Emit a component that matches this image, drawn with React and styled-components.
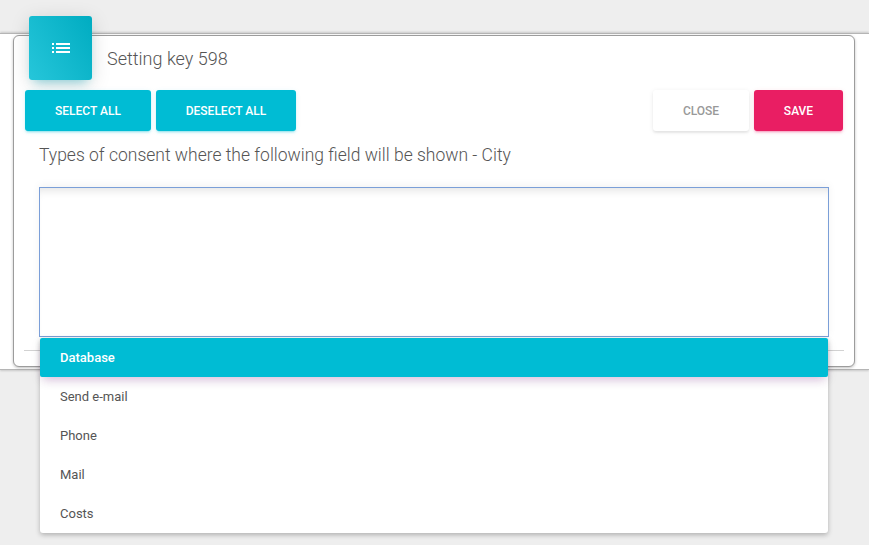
import React from "react";
import styled, { createGlobalStyle } from "styled-components";

const GlobalStyle = createGlobalStyle`
  html, body { margin: 0; padding: 0; }
  body {
    background: #eeeeee;
    font-family: Roboto, "Helvetica Neue", Arial, sans-serif;
    color: #555;
    min-height: 545px;
  }
  #root { padding-top: 33px; }
`;

const Band = styled.div`
  background: #fff;
  border-top: 1px solid #b5b5b5;
  border-bottom: 1px solid #b5b5b5;
  box-shadow: 0 -1px 2px rgba(0,0,0,0.15), 0 1px 2px rgba(0,0,0,0.15);
  padding: 1px 14px 2px 13px;
`;

const Card = styled.div`
  position: relative;
  background: #fff;
  border: 1px solid #9c9c9c;
  border-radius: 6px;
  box-shadow: 0 1px 3px rgba(0,0,0,0.25);
  padding: 0 0 15px;
`;

const Header = styled.div`
  display: flex;
  align-items: flex-start;
`;

const IconBox = styled.div`
  width: 63px;
  height: 64px;
  margin: -20px 0 0 15px;
  border-radius: 3px;
  background: linear-gradient(60deg, #26c6da, #00acc1);
  box-shadow: 0 4px 20px 0 rgba(0,0,0,0.14), 0 7px 10px -5px rgba(0,188,212,0.4);
  display: flex;
  align-items: center;
  justify-content: center;
  color: #fff;
`;

const Title = styled.h4`
  margin: 11px 0 0 15px;
  font-size: 18px;
  font-weight: 300;
  line-height: 24px;
  color: #555;
`;

const ButtonRow = styled.div`
  display: flex;
  gap: 5px;
  margin: 10px 11px 0 11px;
`;

const Spacer = styled.div`
  flex: 1;
`;

const Button = styled.button`
  height: 41px;
  width: ${p => p.$w}px;
  border: none;
  border-radius: 3px;
  font-family: Roboto, Arial, sans-serif;
  font-size: 12px;
  font-weight: 500;
  text-transform: uppercase;
  letter-spacing: 0;
  cursor: pointer;
  background: ${p => p.$bg};
  color: ${p => p.$color};
  box-shadow: ${p => p.$shadow};
`;

const Label = styled.div`
  margin: 12px 0 0 25px;
  font-size: 17.5px;
  font-weight: 300;
  line-height: 24px;
  color: #555;
`;

const FieldWrap = styled.div`
  position: relative;
  margin: 20px 25px 0 25px;
`;

const Field = styled.div`
  height: 150px;
  box-sizing: border-box;
  border: 1px solid #7b9fd8;
  background: #fff;
  box-shadow: inset 0 8px 10px -6px rgba(0,0,0,0.12), 0 -2px 8px rgba(0,0,0,0.05);
`;

const Divider = styled.div`
  height: 1px;
  background: #d2d2d2;
  margin: 13px 10px 0 10px;
`;

const Menu = styled.ul`
  position: absolute;
  top: calc(100% + 1px);
  left: 1px;
  right: 1px;
  margin: 0;
  padding: 0;
  list-style: none;
  background: #fff;
  border-radius: 0 0 3px 3px;
  box-shadow: 0 2px 5px rgba(0,0,0,0.26);
  z-index: 10;
`;

const Item = styled.li`
  height: 39px;
  display: flex;
  align-items: center;
  padding-left: 20px;
  font-size: 13px;
  font-weight: ${p => (p.$active ? 500 : 400)};
  color: ${p => (p.$active ? "#fff" : "#555")};
  background: ${p => (p.$active ? "#00bcd4" : "transparent")};
  border-radius: ${p => (p.$active ? "2px" : "0")};
  box-shadow: ${p =>
    p.$active
      ? "0 6px 10px -4px rgba(156,39,176,0.25), 0 4px 12px 0 rgba(0,0,0,0.08)"
      : "none"};
  position: relative;
`;

const ListIcon = () => (
  <svg width="24" height="24" viewBox="0 0 24 24" fill="currentColor">
    <path d="M3 13h2v-2H3v2zm0 4h2v-2H3v2zm0-8h2V7H3v2zm4 4h14v-2H7v2zm0 4h14v-2H7v2zM7 7v2h14V7H7z" />
  </svg>
);

const items = ["Database", "Send e-mail", "Phone", "Mail", "Costs"];

const tealShadow =
  "0 2px 2px 0 rgba(0,188,212,0.14), 0 3px 1px -2px rgba(0,188,212,0.2), 0 1px 5px 0 rgba(0,188,212,0.12)";
const pinkShadow =
  "0 2px 2px 0 rgba(233,30,99,0.14), 0 3px 1px -2px rgba(233,30,99,0.2), 0 1px 5px 0 rgba(233,30,99,0.12)";
const whiteShadow =
  "0 2px 2px 0 rgba(0,0,0,0.06), 0 1px 5px 0 rgba(0,0,0,0.08)";

export default function App() {
  return (
    <>
      <GlobalStyle />
      <Band>
        <Card>
          <Header>
            <IconBox>
              <ListIcon />
            </IconBox>
            <Title>Setting key 598</Title>
          </Header>
          <ButtonRow>
            <Button $w={126} $bg="#00bcd4" $color="#fff" $shadow={tealShadow}>
              Select all
            </Button>
            <Button $w={140} $bg="#00bcd4" $color="#fff" $shadow={tealShadow}>
              Deselect all
            </Button>
            <Spacer />
            <Button $w={96} $bg="#fff" $color="#999" $shadow={whiteShadow}>
              Close
            </Button>
            <Button $w={89} $bg="#e91e63" $color="#fff" $shadow={pinkShadow}>
              Save
            </Button>
          </ButtonRow>
          <Label>Types of consent where the following field will be shown - City</Label>
          <FieldWrap>
            <Field />
            <Menu>
              {items.map((it, i) => (
                <Item key={it} $active={i === 0}>
                  {it}
                </Item>
              ))}
            </Menu>
          </FieldWrap>
          <Divider />
        </Card>
      </Band>
    </>
  );
}
